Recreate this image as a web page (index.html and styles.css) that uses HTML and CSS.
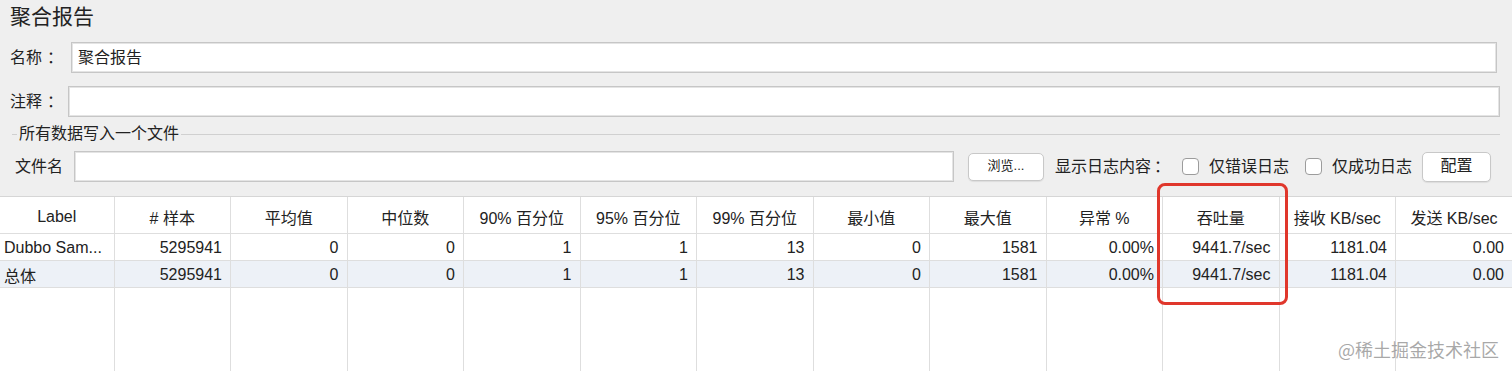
FILE: index.html
```
<!DOCTYPE html>
<html lang="zh-CN">
<head>
    <meta charset="UTF-8">
    <title>聚合报告</title>
    <link rel="stylesheet" href="styles.css">
</head>
<body>
    <div class="panel">
        <div class="title">聚合报告</div>

        <div class="field-row name-row">
            <span class="field-label">名称<span class="colon">：</span></span>
            <div class="text-input">聚合报告</div>
        </div>

        <div class="field-row comment-row">
            <span class="field-label">注释<span class="colon">：</span></span>
            <div class="text-input"></div>
        </div>

        <div class="group-title">
            <span class="group-line short"></span>
            <span class="group-text">所有数据写入一个文件</span>
            <span class="group-line"></span>
        </div>

        <div class="file-row">
            <span class="file-label">文件名</span>
            <div class="text-input file-input"></div>
            <button class="btn btn-small">浏览...</button>
            <span class="log-label">显示日志内容<span class="colon">：</span></span>
            <span class="checkbox"></span>
            <span class="check-text">仅错误日志</span>
            <span class="checkbox"></span>
            <span class="check-text">仅成功日志</span>
            <button class="btn btn-config">配置</button>
        </div>
    </div>

    <div class="results">
        <table class="report">
            <colgroup>
                <col class="first-col">
                <col><col><col><col><col><col><col><col><col><col><col><col>
            </colgroup>
            <thead>
                <tr>
                    <th>Label</th>
                    <th># 样本</th>
                    <th>平均值</th>
                    <th>中位数</th>
                    <th>90% 百分位</th>
                    <th>95% 百分位</th>
                    <th>99% 百分位</th>
                    <th>最小值</th>
                    <th>最大值</th>
                    <th>异常 %</th>
                    <th>吞吐量</th>
                    <th>接收 KB/sec</th>
                    <th>发送 KB/sec</th>
                </tr>
            </thead>
            <tbody>
                <tr>
                    <td class="name">Dubbo Sam...</td>
                    <td>5295941</td>
                    <td>0</td>
                    <td>0</td>
                    <td>1</td>
                    <td>1</td>
                    <td>13</td>
                    <td>0</td>
                    <td>1581</td>
                    <td>0.00%</td>
                    <td>9441.7/sec</td>
                    <td>1181.04</td>
                    <td>0.00</td>
                </tr>
                <tr class="total">
                    <td class="name">总体</td>
                    <td>5295941</td>
                    <td>0</td>
                    <td>0</td>
                    <td>1</td>
                    <td>1</td>
                    <td>13</td>
                    <td>0</td>
                    <td>1581</td>
                    <td>0.00%</td>
                    <td>9441.7/sec</td>
                    <td>1181.04</td>
                    <td>0.00</td>
                </tr>
                <tr class="filler">
                    <td></td><td></td><td></td><td></td><td></td><td></td><td></td>
                    <td></td><td></td><td></td><td></td><td></td><td></td>
                </tr>
            </tbody>
        </table>

        <div class="highlight"></div>
        <div class="watermark">@稀土掘金技术社区</div>
    </div>
</body>
</html>
```

FILE: styles.css
```
body {
    margin: 0;
    background: #efefef;
    color: #222;
    font-family: 'Liberation Sans', 'Noto Sans CJK SC', sans-serif;
    font-size: 16px;
    overflow: hidden;
}

.panel {
    height: 196px;
}

.title {
    height: 36px;
    line-height: 34px;
    padding-left: 10px;
    font-size: 21px;
}

.field-row {
    display: flex;
    align-items: center;
    height: 31px;
}

.name-row {
    margin-top: 6px;
    padding-left: 10px;
    padding-right: 15px;
}

.name-row .field-label {
    width: 61px;
}

.comment-row {
    margin-top: 13px;
    padding-left: 10px;
    padding-right: 12px;
}

.comment-row .field-label {
    width: 58px;
}

.field-label {
    flex: none;
    line-height: 20px;
}

.colon {
    margin-left: 5px;
}

.text-input {
    flex: 1;
    height: 100%;
    box-sizing: border-box;
    background: #fff;
    border: 1px solid #c6c6c6;
    box-shadow: inset 0 0 0 1px #e4e4e4;
    padding: 0 6px;
    line-height: 29px;
}

.group-title {
    display: flex;
    align-items: center;
    height: 20px;
    margin-top: 7px;
    padding-left: 12px;
    padding-right: 12px;
}

.group-line {
    flex: 1;
    height: 1px;
    background: #d0d0d0;
}

.group-line.short {
    flex: none;
    width: 5px;
}

.group-text {
    padding: 0 2px;
    line-height: 20px;
}

.file-row {
    display: flex;
    align-items: center;
    height: 31px;
    margin-top: 7px;
    padding-left: 15px;
}

.file-label {
    width: 59px;
    line-height: 20px;
}

.file-input {
    flex: none;
    width: 880px;
}

.btn {
    flex: none;
    display: flex;
    align-items: center;
    justify-content: center;
    background: #fff;
    border: 1px solid #c8c8c8;
    border-radius: 5px;
    box-shadow: 0 1px 1px rgba(0, 0, 0, 0.08);
    color: #222;
    font-family: inherit;
    line-height: 1;
    padding: 0 0 2px;
}

.btn-small {
    width: 76px;
    height: 28px;
    margin-left: 14px;
    font-size: 13px;
}

.btn-config {
    width: 69px;
    height: 30px;
    margin-left: 10px;
    font-size: 16px;
}

.log-label {
    margin-left: 11px;
    line-height: 20px;
}

.log-label .colon {
    margin-left: 3px;
}

.checkbox {
    flex: none;
    width: 17px;
    height: 17px;
    box-sizing: border-box;
    background: #fff;
    border: 1px solid #9c9c9c;
    border-radius: 4px;
    margin-left: 12px;
}

.check-text {
    margin-left: 10px;
    line-height: 20px;
}

.check-text + .checkbox {
    margin-left: 16px;
}

.results {
    position: relative;
    height: 175px;
    background: #fff;
    border-top: 1px solid #d6d6d6;
}

.report {
    width: 1512px;
    table-layout: fixed;
    border-collapse: collapse;
}

.first-col {
    width: 114px;
}

.report th,
.report td {
    border-right: 1px solid #dedede;
    border-bottom: 1px solid #dedede;
    padding: 2px 8px 0 4px;
    white-space: nowrap;
    overflow: hidden;
    font-weight: normal;
}

.report th:last-child,
.report td:last-child {
    border-right: none;
}

.report th {
    height: 33px;
    text-align: center;
    padding: 3px 2px 0;
}

.report td {
    height: 24px;
    text-align: right;
}

.report td.name {
    text-align: left;
}

.report tr.total td {
    background: #edf1f7;
}

.report tr.filler td {
    height: 84px;
    border-bottom: none;
}

.highlight {
    position: absolute;
    left: 1157px;
    top: -14px;
    width: 131px;
    height: 122px;
    box-sizing: border-box;
    border: 3.5px solid #e0372c;
    border-radius: 8px;
}

.watermark {
    position: absolute;
    right: 13px;
    bottom: 12px;
    font-family: 'Noto Sans CJK SC', sans-serif;
    font-size: 18px;
    line-height: 22px;
    color: rgba(140, 140, 140, 0.75);
}
```
